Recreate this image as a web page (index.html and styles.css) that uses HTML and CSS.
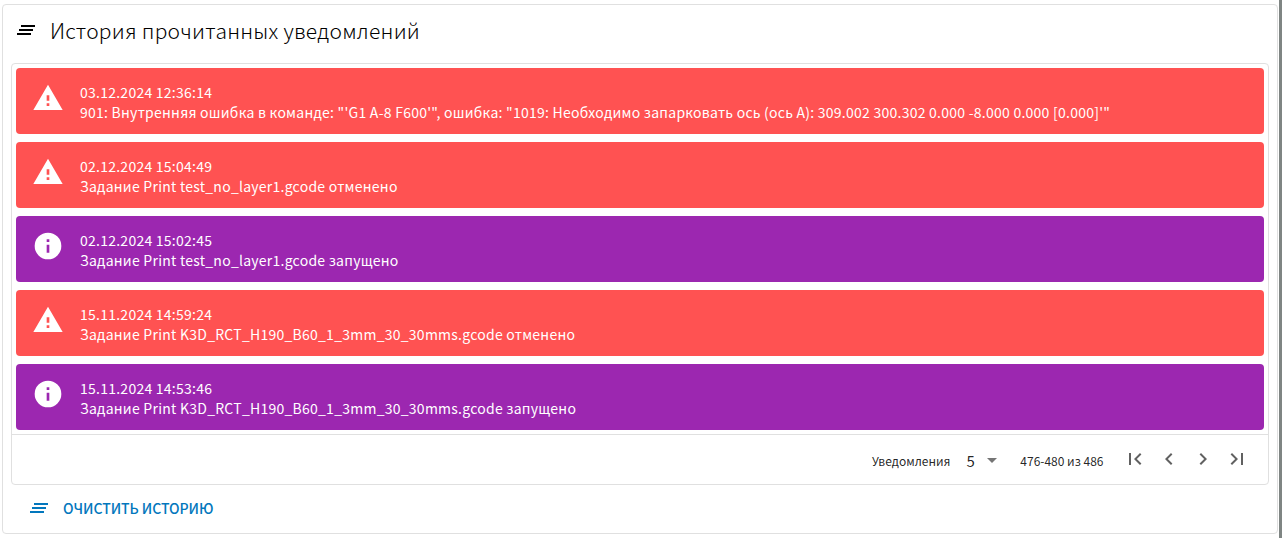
FILE: index.html
```html
<!DOCTYPE html>
<html lang="ru">

<head>
    <meta charset="UTF-8">
    <meta name="viewport" content="width=device-width, initial-scale=1.0">
    <title>История прочитанных уведомлений</title>
    <link rel="stylesheet" href="styles.css">
</head>

<body>
    <div class="page">
        <div class="card">
            <div class="card_title">
                <svg class="title_icon" viewBox="0 0 24 24"><path d="M5,13H19V11H5V13M3,17H17V15H3V17M7,7V9H21V7H7Z"/></svg>
                <span>История прочитанных уведомлений</span>
            </div>

            <div class="table_box">
                <div class="alert_list">
                    <div class="alert alert_error">
                        <svg class="alert_icon" viewBox="0 0 24 24"><path d="M13 14H11V10H13M13 18H11V16H13M1 21H23L12 2L1 21Z"/></svg>
                        <div class="alert_text">
                            <div>03.12.2024 12:36:14</div>
                            <div>901: Внутренняя ошибка в команде: "'G1 A-8 F600'", ошибка: "1019: Необходимо запарковать ось (ось A): 309.002 300.302 0.000 -8.000 0.000 [0.000]'"</div>
                        </div>
                    </div>
                    <div class="alert alert_error">
                        <svg class="alert_icon" viewBox="0 0 24 24"><path d="M13 14H11V10H13M13 18H11V16H13M1 21H23L12 2L1 21Z"/></svg>
                        <div class="alert_text">
                            <div>02.12.2024 15:04:49</div>
                            <div>Задание Print test_no_layer1.gcode отменено</div>
                        </div>
                    </div>
                    <div class="alert alert_info">
                        <svg class="alert_icon" viewBox="0 0 24 24"><path d="M13,9H11V7H13M13,17H11V11H13M12,2A10,10 0 0,0 2,12A10,10 0 0,0 12,22A10,10 0 0,0 22,12A10,10 0 0,0 12,2Z"/></svg>
                        <div class="alert_text">
                            <div>02.12.2024 15:02:45</div>
                            <div>Задание Print test_no_layer1.gcode запущено</div>
                        </div>
                    </div>
                    <div class="alert alert_error">
                        <svg class="alert_icon" viewBox="0 0 24 24"><path d="M13 14H11V10H13M13 18H11V16H13M1 21H23L12 2L1 21Z"/></svg>
                        <div class="alert_text">
                            <div>15.11.2024 14:59:24</div>
                            <div>Задание Print K3D_RCT_H190_B60_1_3mm_30_30mms.gcode отменено</div>
                        </div>
                    </div>
                    <div class="alert alert_info">
                        <svg class="alert_icon" viewBox="0 0 24 24"><path d="M13,9H11V7H13M13,17H11V11H13M12,2A10,10 0 0,0 2,12A10,10 0 0,0 12,22A10,10 0 0,0 22,12A10,10 0 0,0 12,2Z"/></svg>
                        <div class="alert_text">
                            <div>15.11.2024 14:53:46</div>
                            <div>Задание Print K3D_RCT_H190_B60_1_3mm_30_30mms.gcode запущено</div>
                        </div>
                    </div>
                </div>

                <div class="table_footer">
                    <span class="per_page_label">Уведомления</span>
                    <span class="per_page_value">5</span>
                    <svg class="per_page_arrow" viewBox="0 0 24 24"><path d="M7,10L12,15L17,10H7Z"/></svg>
                    <span class="page_range">476-480 из 486</span>
                    <div class="page_buttons">
                        <svg class="page_icon" viewBox="0 0 24 24"><path d="M18.41,16.59L13.82,12L18.41,7.41L17,6L11,12L17,18L18.41,16.59M6,6H8V18H6V6Z"/></svg>
                        <svg class="page_icon" viewBox="0 0 24 24"><path d="M15.41,16.58L10.83,12L15.41,7.41L14,6L8,12L14,18L15.41,16.58Z"/></svg>
                        <svg class="page_icon" viewBox="0 0 24 24"><path d="M8.59,16.58L13.17,12L8.59,7.41L10,6L16,12L10,18L8.59,16.58Z"/></svg>
                        <svg class="page_icon" viewBox="0 0 24 24"><path d="M5.59,7.41L10.18,12L5.59,16.59L7,18L13,12L7,6L5.59,7.41M16,6H18V18H16V6Z"/></svg>
                    </div>
                </div>
            </div>

            <div class="card_actions">
                <div class="clear_button">
                    <svg class="clear_icon" viewBox="0 0 24 24"><path d="M5,13H19V11H5V13M3,17H17V15H3V17M7,7V9H21V7H7Z"/></svg>
                    <span>Очистить историю</span>
                </div>
            </div>
        </div>
    </div>
</body>

</html>
```
FILE: styles.css
```css
html,
body {
    height: 100%;
}

body {
    font-family: "Noto Sans CJK SC", "Noto Sans", sans-serif;
    background-color: #fff;
    color: rgba(0, 0, 0, 0.87);
    margin: 0;
    overflow: hidden;
}

.page {
    height: 538px;
    box-sizing: border-box;
    padding: 4px 0 0 2px;
    border-right: 3px solid #7f8583;
}

.card {
    width: 1276px;
    height: 530px;
    box-sizing: border-box;
    border: 1px solid #e0e0e0;
    border-radius: 4px;
    background-color: #fff;
    display: flex;
    flex-direction: column;
}

.card_title {
    display: flex;
    align-items: center;
    height: 50px;
    padding-left: 11px;
    font-size: 21px;
    letter-spacing: 0.25px;
    font-weight: 300;
    color: #000;
}

.title_icon {
    width: 24px;
    height: 24px;
    margin-right: 12px;
    fill: #000;
}

.table_box {
    margin: 8px 8px 0 8px;
    height: 422px;
    box-sizing: border-box;
    border: 1px solid #e0e0e0;
    border-radius: 4px;
}

.alert_list {
    padding: 4px;
    display: flex;
    flex-direction: column;
    gap: 8px;
    border-bottom: 1px solid #e0e0e0;
}

.alert {
    height: 66px;
    box-sizing: border-box;
    border-radius: 4px;
    padding: 0 16px;
    display: flex;
    align-items: center;
    color: #fff;
    font-size: 14px;
    font-weight: 400;
    line-height: 20px;
    letter-spacing: 0.25px;
}

.alert_error {
    background-color: #ff5252;
}

.alert_info {
    background-color: #9c27b0;
}

.alert_icon {
    width: 32px;
    height: 32px;
    margin-left: -0.5px;
    margin-right: 16.5px;
    margin-top: -6px;
    fill: #fff;
    flex-shrink: 0;
}

.alert_text {
    padding-top: 2px;
}

.table_footer {
    display: flex;
    align-items: center;
    justify-content: flex-end;
    height: 50px;
    padding-right: 19px;
    font-size: 12px;
}

.per_page_value {
    font-size: 15px;
    font-weight: 400;
    margin-left: 16px;
}

.per_page_arrow {
    width: 24px;
    height: 24px;
    fill: #757575;
    margin-left: 5.5px;
}

.page_range {
    margin-left: 16px;
    margin-right: 19.5px;
}

.page_buttons {
    display: flex;
    gap: 10px;
    margin-top: -3px;
}

.page_icon {
    width: 24px;
    height: 24px;
    fill: #616161;
}

.card_actions {
    display: flex;
    align-items: center;
    flex: 1;
    padding-left: 23.5px;
    padding-bottom: 2px;
}

.clear_button {
    display: flex;
    align-items: center;
    color: #0277bd;
    font-size: 14px;
    font-weight: 500;
    letter-spacing: -0.05px;
    text-transform: uppercase;
}

.clear_icon {
    width: 24px;
    height: 24px;
    margin-right: 12.5px;
    fill: #0277bd;
}
```
